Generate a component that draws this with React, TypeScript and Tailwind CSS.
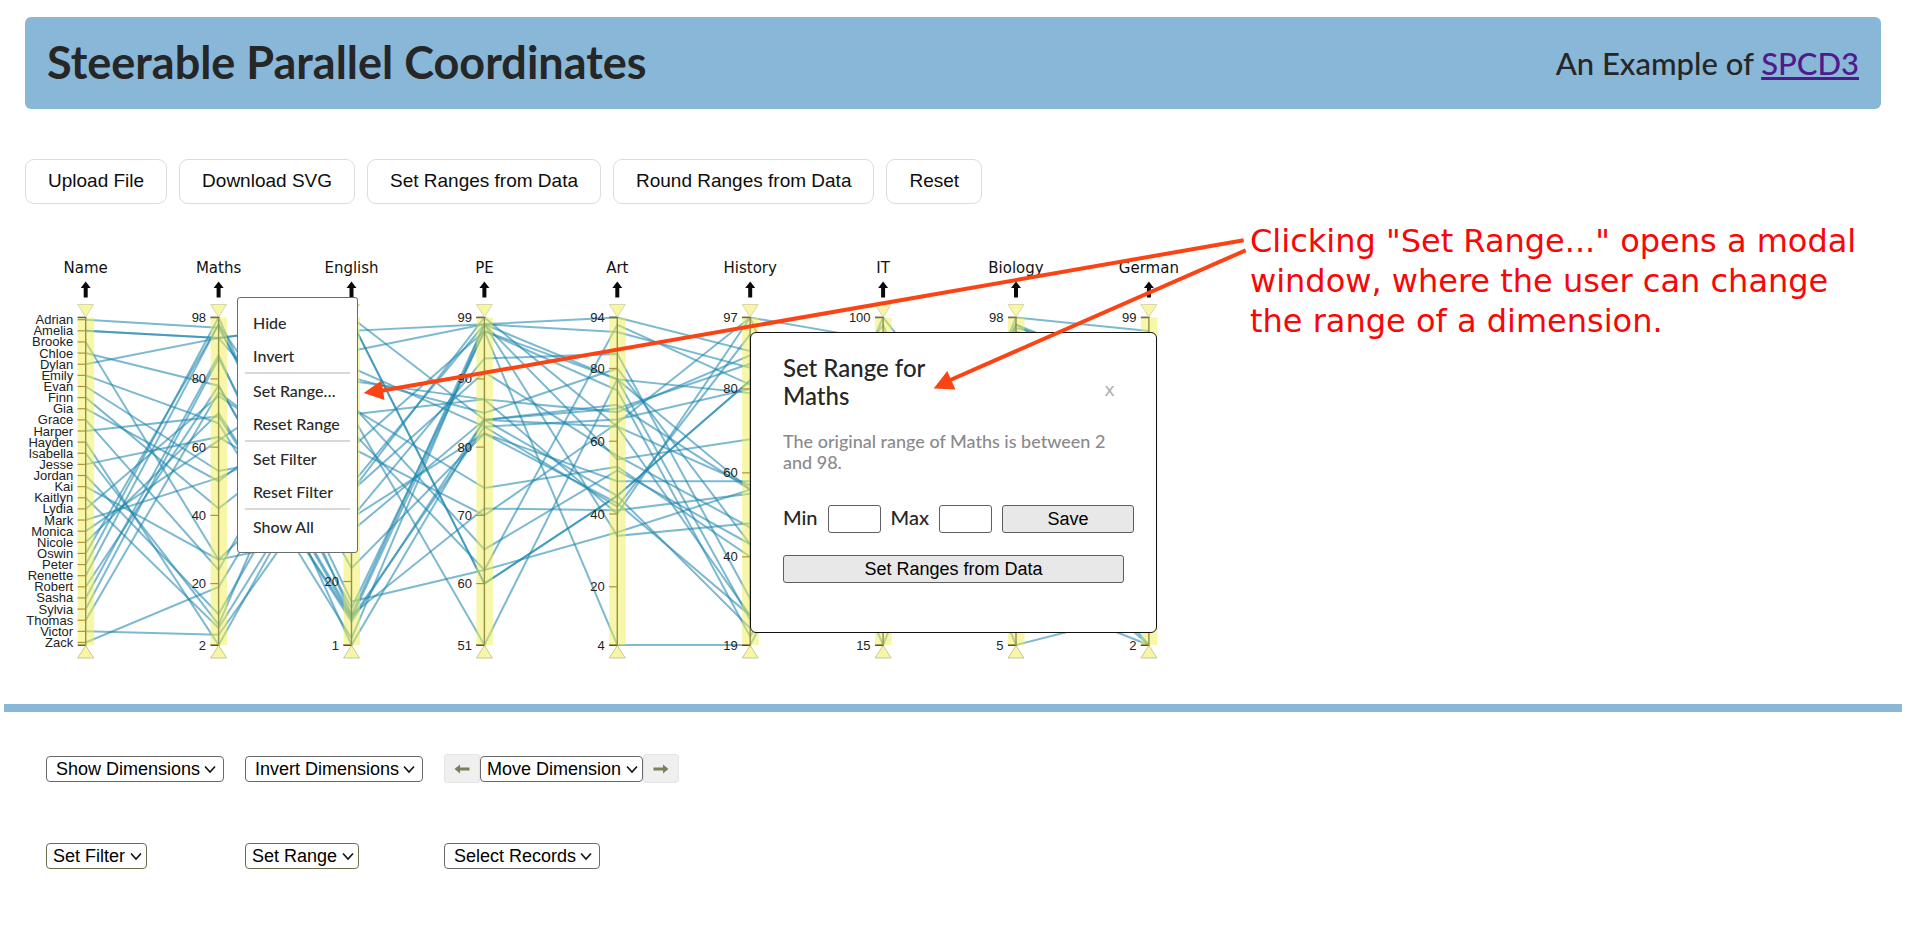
import type { ReactNode } from "react";

type Dimension = {
  name: string;
  min: number;
  max: number;
  ticks: number[];
};

const STUDENTS: [string, ...number[]][] = [
  ["Adrian", 95, 24, 82, 49, 58, 85, 21, 24],
  ["Amelia", 92, 98, 60, 45, 82, 85, 78, 92],
  ["Amelia", 92, 98, 60, 45, 82, 85, 78, 92],
  ["Brooke", 27, 35, 84, 45, 23, 50, 15, 22],
  ["Chloe", 78, 9, 83, 66, 80, 63, 29, 12],
  ["Dylan", 92, 47, 91, 56, 47, 81, 60, 51],
  ["Emily", 67, 3, 98, 77, 25, 100, 50, 34],
  ["Evan", 53, 60, 97, 74, 21, 78, 72, 75],
  ["Finn", 42, 73, 65, 52, 43, 61, 82, 85],
  ["Gia", 50, 81, 85, 80, 43, 46, 73, 91],
  ["Grace", 24, 95, 98, 94, 89, 25, 91, 69],
  ["Harper", 69, 9, 97, 77, 56, 94, 38, 2],
  ["Hayden", 2, 72, 74, 53, 40, 40, 66, 64],
  ["Isabella", 8, 99, 84, 69, 86, 20, 86, 85],
  ["Jesse", 63, 39, 93, 84, 30, 71, 86, 19],
  ["Jordan", 11, 80, 87, 68, 88, 20, 96, 81],
  ["Kai", 27, 65, 62, 92, 81, 28, 94, 84],
  ["Kaitlyn", 7, 70, 51, 77, 79, 29, 96, 73],
  ["Lydia", 75, 49, 98, 55, 68, 67, 91, 87],
  ["Mark", 51, 70, 87, 40, 97, 94, 60, 95],
  ["Monica", 62, 89, 98, 90, 85, 27, 95, 86],
  ["Nicole", 70, 8, 84, 64, 26, 70, 12, 8],
  ["Oswin", 96, 14, 62, 35, 56, 98, 5, 12],
  ["Peter", 98, 10, 71, 41, 55, 66, 38, 29],
  ["Renette", 96, 39, 82, 43, 26, 92, 20, 2],
  ["Robert", 78, 10, 98, 34, 48, 89, 22, 9],
  ["Sasha", 87, 1, 84, 70, 56, 88, 49, 2],
  ["Sylvia", 86, 12, 97, 4, 19, 80, 36, 8],
  ["Thomas", 76, 47, 99, 64, 57, 90, 44, 33],
  ["Victor", 5, 60, 70, 65, 97, 19, 63, 83],
  ["Zack", 19, 84, 83, 42, 93, 15, 98, 95],
];

const DIMENSIONS: Dimension[] = [
  { name: "Maths", min: 2, max: 98, ticks: [98, 80, 60, 40, 20, 2] },
  { name: "English", min: 1, max: 99, ticks: [20, 1] },
  { name: "PE", min: 51, max: 99, ticks: [99, 90, 80, 70, 60, 51] },
  { name: "Art", min: 4, max: 94, ticks: [94, 80, 60, 40, 20, 4] },
  { name: "History", min: 19, max: 97, ticks: [97, 80, 60, 40, 19] },
  { name: "IT", min: 15, max: 100, ticks: [100, 15] },
  { name: "Biology", min: 5, max: 98, ticks: [98, 5] },
  { name: "German", min: 2, max: 99, ticks: [99, 2] },
];

const NAMES = Array.from(new Set(STUDENTS.map((s) => s[0])));
const TOP = 101.5;
const BOTTOM = 429;
const axisX = (i: number) => 85.7 + i * 132.9;
const nameY = (name: string) => 103.7 + NAMES.indexOf(name) * 11.13;
const valueY = (d: Dimension, v: number) =>
  BOTTOM - ((v - d.min) / (d.max - d.min)) * (BOTTOM - TOP);

function Axis({ x, label, ticks }: { x: number; label: string; ticks: { text: string; y: number }[] }) {
  return (
    <g>
      <text x={x} y={57} textAnchor="middle" className="font-['DejaVu_Sans',sans-serif] text-[15px]" fill="#111">
        {label}
      </text>
      <path d={`M${x} 65.5l5 6.5h-3v9.500h-4v-9.500h-3z`} fill="#0a0a0a" />
      <path d={`M${x - 8} ${TOP}H${x}V${BOTTOM}H${x - 8}`} fill="none" stroke="#333" strokeWidth="1.4" />
      {ticks.map((t) => (
        <path key={t.text} d={`M${x - 8} ${t.y}H${x}`} stroke="#6b3a1c" strokeWidth="1.2" />
      ))}
      <rect x={x - 8} y={TOP} width="16.500" height={BOTTOM - TOP} fill="#f2ee52" opacity="0.5" />
      <path d={`M${x - 8} 88.500h16l-8 12.500z`} fill="#f8f6a6" stroke="#cfcf9c" strokeWidth="0.8" />
      <path d={`M${x - 8} 442h16l-8 -12.500z`} fill="#f8f6a6" stroke="#b9bb8c" strokeWidth="0.8" />
      {ticks.map((t) => (
        <text
          key={t.text}
          x={x - 12.5}
          y={t.y + 4.5}
          textAnchor="end"
          className="font-['Liberation_Sans',sans-serif] text-[13px]"
          fill="#222"
        >
          {t.text}
        </text>
      ))}
    </g>
  );
}

function ParallelChart() {
  return (
    <svg width="1200" height="460" viewBox="0 0 1200 460" className="block shrink-0" role="img" aria-label="Parallel coordinates">
      <g fill="none" stroke="#1f86ae" strokeOpacity="0.58" strokeWidth="2">
        {STUDENTS.map(([name, ...values], i) => (
          <polyline
            key={i}
            points={[
              `${axisX(0)},${nameY(name)}`,
              ...values.map((v, k) => `${axisX(k + 1)},${valueY(DIMENSIONS[k], v)}`),
            ].join(" ")}
          />
        ))}
      </g>
      <Axis x={axisX(0)} label="Name" ticks={NAMES.map((n) => ({ text: n, y: nameY(n) }))} />
      {DIMENSIONS.map((d, i) => (
        <Axis
          key={d.name}
          x={axisX(i + 1)}
          label={d.name}
          ticks={d.ticks.map((t) => ({ text: String(t), y: valueY(d, t) }))}
        />
      ))}
    </svg>
  );
}

function ContextMenu() {
  const groups = [["Hide", "Invert"], ["Set Range…", "Reset Range"], ["Set Filter", "Reset Filter"], ["Show All"]];
  return (
    <div className="absolute left-[237px] top-[81px] flex w-[121px] flex-col rounded-[3px] border border-[#6c6c70] bg-white px-[7px] pb-[9px] pt-2">
      {groups.map((g, i) => (
        <div key={g[0]} className={i ? "flex flex-col border-t-2 border-[#d8d8d8]" : "flex flex-col"}>
          {g.map((item) => (
            <button
              key={item}
              type="button"
              className="h-[33px] whitespace-nowrap px-2 text-left text-base text-[#2a2a2a]"
            >
              {item}
            </button>
          ))}
        </div>
      ))}
    </div>
  );
}

function RangeDialog() {
  const field = "h-7 w-[53px] rounded-[3px] border border-[#606060] bg-white px-1";
  const action =
    "h-7 rounded-[3px] border border-[#5e5e5e] bg-[#e8e8e8] font-['Liberation_Sans',sans-serif] text-lg leading-6 text-black";
  return (
    <div
      role="dialog"
      aria-label="Set Range for Maths"
      className="absolute left-[750px] top-[116px] h-[301px] w-[407px] rounded-md border border-[#111] bg-white px-8 pt-[21px]"
    >
      <div className="flex items-end justify-between pr-[9px]">
        <h2 className="w-[200px] text-2xl leading-7 text-[#262626]">Set Range for Maths</h2>
        <button type="button" aria-label="Close" className="font-['DejaVu_Sans',sans-serif] text-lg leading-10 text-[#b0b0b0]">
          x
        </button>
      </div>
      <p className="mt-[21px] w-[335px] text-[18px] leading-[21px] text-[#8a8a8a]">
        The original range of Maths is between 2 and 98.
      </p>
      <div className="mt-8 flex w-[351px] items-center justify-between text-xl leading-7 text-[#262626]">
        <label htmlFor="range-min" className="pb-1 leading-6">Min</label>
        <input id="range-min" type="text" className={field} />
        <label htmlFor="range-max" className="pb-1 leading-6">Max</label>
        <input id="range-max" type="text" className={field} />
        <button type="button" className={`${action} w-[132px]`}>
          Save
        </button>
      </div>
      <button type="button" className={`${action} mt-[22px] w-[341px]`}>
        Set Ranges from Data
      </button>
    </div>
  );
}

function Pointers() {
  return (
    <svg width="1260" height="460" viewBox="0 0 1260 460" className="pointer-events-none absolute left-0 top-0" aria-hidden="true">
      <g stroke="#fc4313" strokeWidth="4" fill="#fc4313">
        <path d="M1243.700 24.300L380 175" />
        <path d="M1245.700 34.300L948 165" />
        <path stroke="none" d="M363.700 177L381.500 164.500L384.500 184z" />
        <path stroke="none" d="M933.700 172.500L947.300 155L955.500 173.500z" />
      </g>
    </svg>
  );
}

function Dropdown({ label, compact, tone = "border-[#6a6a6a]" }: { label: string; compact?: boolean; tone?: string }) {
  return (
    <div className="relative w-fit">
      <select
        aria-label={label}
        className={`block h-[26px] appearance-none rounded-[4px] border bg-white font-['Liberation_Sans',sans-serif] text-lg leading-[24px] text-black ${tone} ${compact ? "pl-[6px] pr-[20px]" : "pl-[9px] pr-[22px]"}`}
      >
        <option>{label}</option>
      </select>
      <svg
        className={`pointer-events-none absolute top-[9px] ${compact ? "right-[5px]" : "right-2"}`}
        width="12"
        height="9"
        viewBox="0 0 12 9"
        fill="none"
        stroke="#111"
        strokeWidth="1.600"
        aria-hidden="true"
      >
        <path d="M1 1.500l5 5.500l5 -5.500" />
      </svg>
    </div>
  );
}

function MoveButton({ label, flip }: { label: string; flip?: boolean }) {
  return (
    <button type="button" aria-label={label} className="flex h-[29px] w-9 items-center justify-center rounded-[3px] border border-[#e4e4e4] bg-[#efefef]">
      <svg width="16" height="10" viewBox="0 0 16 10" className={flip ? "-scale-x-100" : ""} fill="#7d7f58" aria-hidden="true">
        <path d="M0.500 5L6 0.500V3.500H15.500V6.500H6V9.500z" />
      </svg>
    </button>
  );
}

function ToolButton({ children }: { children: ReactNode }) {
  return (
    <button
      type="button"
      className="h-[45px] rounded-[9px] border border-[#dcdcdc] bg-white px-[22px] font-['Liberation_Sans',sans-serif] text-[19px] text-[#0d0d0d]"
    >
      {children}
    </button>
  );
}

export default function App() {
  return (
    <div className="bg-white pt-[17px] font-['Lato',sans-serif] font-medium">
      <header className="mx-[25px] flex h-[92px] items-center justify-between rounded-md bg-[#88b7d8] px-[22px] text-[#262626]">
        <h1 className="text-[45px] font-bold">Steerable Parallel Coordinates</h1>
        <p className="text-[31px]">
          An Example of{" "}
          <a href="#spcd3" className="text-[#4f1a8b] underline">
            SPCD3
          </a>
        </p>
      </header>

      <div className="ml-[25px] mt-[50px] flex gap-3">
        <ToolButton>Upload File</ToolButton>
        <ToolButton>Download SVG</ToolButton>
        <ToolButton>Set Ranges from Data</ToolButton>
        <ToolButton>Round Ranges from Data</ToolButton>
        <ToolButton>Reset</ToolButton>
      </div>

      <main className="relative mt-3 flex items-start">
        <ParallelChart />
        <ContextMenu />
        <RangeDialog />
        <Pointers />
        <p className="ml-[50px] mt-[5px] w-[630px] font-['DejaVu_Sans',sans-serif] text-[32px] font-normal leading-10 text-[#f90606]">
          Clicking "Set Range..." opens a modal window, where the user can change the range of a dimension.
        </p>
      </main>

      <hr className="mx-1 mt-[28px] h-2 border-0 bg-[#88b7d8]" />

      <section className="ml-[46px] mt-[42px] grid grid-cols-[199px_199px_1fr] items-center gap-y-[60px]">
        <Dropdown label="Show Dimensions" />
        <Dropdown label="Invert Dimensions" />
        <div className="flex items-center">
          <MoveButton label="Move left" />
          <Dropdown label="Move Dimension" compact />
          <MoveButton label="Move right" flip />
        </div>
        <Dropdown label="Set Filter" compact tone="border-[#6c6e4e]" />
        <Dropdown label="Set Range" compact tone="border-[#6c6e4e]" />
        <Dropdown label="Select Records" />
      </section>
    </div>
  );
}
